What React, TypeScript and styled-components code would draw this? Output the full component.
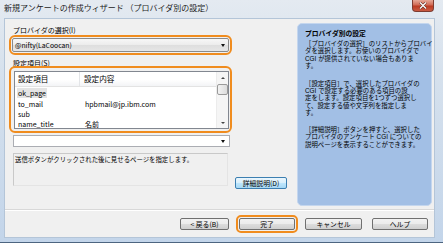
import styled, { createGlobalStyle } from 'styled-components';

const GlobalStyle = createGlobalStyle`
  html, body {
    margin: 0;
    padding: 0;
    background: #fff;
  }
  body {
    font-family: "Noto Sans CJK JP", "Liberation Sans", sans-serif;
    color: #000;
  }
`;

const Window = styled.div`
  width: 443px;
  height: 243px;
  box-sizing: border-box;
  display: flex;
  flex-direction: column;
  padding: 0 8px 4px 4px;
  background: linear-gradient(#e4eaf1 0%, #d6e1ed 30%, #c3d5ea 100%);
  border-bottom: 1px solid #4d6580;
  overflow: hidden;
`;

const TitleBar = styled.div`
  height: 18px;
  flex: none;
  display: flex;
  justify-content: space-between;
  align-items: flex-start;
`;

const Title = styled.div`
  padding-top: 3px;
  font-size: 8px;
  line-height: 9px;
  color: #1c1c1c;
  white-space: nowrap;
`;

const CloseButton = styled.div`
  width: 22px;
  height: 12px;
  margin-right: 1px;
  box-sizing: border-box;
  display: flex;
  align-items: center;
  justify-content: center;
  border: 1px solid #7d3b30;
  border-top: none;
  border-radius: 0 0 4px 4px;
  background: linear-gradient(#e6a796 0%, #d06a55 45%, #bb3a22 55%, #c95a42 100%);
`;

const Client = styled.div`
  flex: 1;
  display: flex;
  flex-direction: column;
  box-sizing: border-box;
  background: #f0f0f0;
  border: 1px solid #b4c5d8;
`;

const Body = styled.div`
  height: 190px;
  flex: none;
  display: flex;
  padding: 4px 2px 0 4px;
  box-sizing: border-box;
`;

const LeftCol = styled.div`
  width: 281px;
  display: flex;
  flex-direction: column;
`;

const Label = styled.div<{ $top: number }>`
  margin-top: ${({ $top }) => $top}px;
  margin-bottom: ${({ $top }) => ($top > 3 ? -2 : 0)}px;
  padding-left: 4px;
  height: 8px;
  font-size: 7px;
  line-height: 8px;
  white-space: nowrap;
`;

const Highlight = styled.div<{ $h: number }>`
  width: 223px;
  height: ${({ $h }) => $h}px;
  margin-top: 1px;
  box-sizing: border-box;
  border: 2px solid #f08c1e;
  border-radius: 6px;
  padding: ${({ $h }) => ($h > 30 ? '3px 1px 2px 3px' : '1px')};
`;

const DropList = styled.div`
  height: 14px;
  box-sizing: border-box;
  display: flex;
  align-items: center;
  justify-content: space-between;
  padding: 0 3px 0 2px;
  border: 1px solid #8a8a8a;
  border-radius: 2px;
  background: linear-gradient(#f7f7f7 0%, #ececec 50%, #dedede 51%, #e6e6e6 100%);
  font-size: 6.8px;
`;

const Arrow = styled.span`
  width: 0;
  height: 0;
  border-left: 2.5px solid transparent;
  border-right: 2.5px solid transparent;
  border-top: 3px solid #111;
`;

const ListView = styled.div`
  height: 58px;
  box-sizing: border-box;
  display: flex;
  border: 1px solid #828790;
  background: #fff;
`;

const ListContent = styled.div`
  flex: 1;
  display: flex;
  flex-direction: column;
`;

const HeaderRow = styled.div`
  height: 15px;
  flex: none;
  box-sizing: border-box;
  display: flex;
  border-bottom: 1px solid #e3e3e3;
  background: linear-gradient(#ffffff 0%, #ffffff 55%, #f3f4f6 100%);
  font-size: 7.6px;
  line-height: 14px;
`;

const HeadCell = styled.div<{ $w?: number }>`
  width: ${({ $w }) => ($w ? `${$w}px` : 'auto')};
  flex: ${({ $w }) => ($w ? 'none' : '1')};
  box-sizing: border-box;
  padding-left: ${({ $w }) => ($w ? 3 : 4)}px;
  border-right: ${({ $w }) => ($w ? '1px solid #e3e5e8' : 'none')};
`;

const Rows = styled.div`
  padding-top: 1.5px;
`;

const Row = styled.div`
  height: 10.4px;
  display: flex;
  align-items: center;
  font-size: 7px;
  line-height: 9px;
`;

const Cell = styled.div<{ $w?: number }>`
  width: ${({ $w }) => ($w ? `${$w}px` : 'auto')};
  flex: ${({ $w }) => ($w ? 'none' : '1')};
  padding-left: ${({ $w }) => ($w ? 3 : 5)}px;
  box-sizing: border-box;
  white-space: nowrap;
`;

const Selected = styled.span`
  margin-left: -1px;
  padding: 0 1px;
  background: #e4e4e4;
`;

const ScrollBar = styled.div`
  width: 11px;
  flex: none;
  display: flex;
  flex-direction: column;
  background: #f5f5f5;
  border-left: 1px solid #ececec;
`;

const ScrollBtn = styled.div`
  height: 11px;
  display: flex;
  align-items: center;
  justify-content: center;
`;

const ArrowUp = styled.span`
  width: 0;
  height: 0;
  border-left: 2px solid transparent;
  border-right: 2px solid transparent;
  border-bottom: 2.5px solid #444;
`;

const ArrowDown = styled(ArrowUp)`
  border-bottom: none;
  border-top: 2.5px solid #444;
`;

const Thumb = styled.div`
  height: 11px;
  margin: 1px 0 0 0;
  box-sizing: border-box;
  border: 1px solid #9a9a9a;
  border-radius: 2px;
  background: linear-gradient(90deg, #f2f2f2, #dcdcdc);
`;

const ScrollTrack = styled.div`
  flex: 1;
`;

const Combo = styled.div`
  width: 217px;
  height: 12px;
  margin: 2px 0 0 4px;
  box-sizing: border-box;
  display: flex;
  align-items: center;
  justify-content: flex-end;
  padding-right: 4px;
  border: 1px solid #abadb3;
  background: #fff;
`;

const DescRow = styled.div`
  display: flex;
  align-items: flex-start;
  margin-top: 6px;
  padding-left: 4px;
`;

const DescBox = styled.div`
  width: 215px;
  height: 33px;
  box-sizing: border-box;
  padding: 2px 1px;
  border: 1px solid #c9c9c9;
  border-right-color: #e4e4e4;
  border-bottom-color: #e4e4e4;
  background: #f0f0f0;
  font-size: 6.4px;
  line-height: 8px;
  white-space: nowrap;
`;

const Button = styled.button<{ $w: number; $focus?: boolean; $mark?: boolean }>`
  width: ${({ $w }) => $w}px;
  height: 12px;
  padding: 0;
  box-sizing: border-box;
  font-family: "Noto Sans CJK JP", "Liberation Sans", sans-serif;
  font-size: 6.8px;
  line-height: 10px;
  color: #000;
  border-radius: 2px;
  border: 1px solid ${({ $focus }) => ($focus ? '#3c7fb1' : '#707070')};
  background: ${({ $focus }) =>
    $focus
      ? 'linear-gradient(#eaf6fd 0%, #d9f0fc 50%, #bee6fd 51%, #a7d9f5 100%)'
      : 'linear-gradient(#f2f2f2 0%, #ebebeb 50%, #dddddd 51%, #cfcfcf 100%)'};
  outline: ${({ $mark }) => ($mark ? '2px solid #f08c1e' : 'none')};
  outline-offset: 1px;
  white-space: nowrap;
`;

const DetailButton = styled(Button)`
  margin: 24px 0 0 7px;
`;

const Panel = styled.div`
  width: 135px;
  height: 183px;
  margin-left: 7px;
  box-sizing: border-box;
  padding: 6px 0 0 7px;
  border: 1px solid #c4d6ee;
  border-radius: 5px;
  background: #a2bfe5;
  font-family: "Liberation Sans", "Noto Sans CJK JP", sans-serif;
  font-size: 6.4px;
  white-space: nowrap;
`;

const PanelTitle = styled.div`
  font-weight: bold;
  font-size: 6.8px;
  line-height: 8px;
  height: 8px;
`;

const Para = styled.div<{ $top: number }>`
  margin-top: ${({ $top }) => $top}px;
`;

const Line = styled.div`
  height: 7.3px;
  line-height: 7.3px;
`;

const Footer = styled.div`
  flex: 1;
  display: flex;
  justify-content: flex-end;
  align-items: flex-start;
  gap: 10px;
  padding: 8px 6px 0 0;
  border-top: 1px solid #d8d8d8;
  box-shadow: inset 0 1px 0 #fff;
`;

const rows = [
  { key: 'ok_page', value: '', selected: true },
  { key: 'to_mail', value: 'hpbmail@jp.ibm.com' },
  { key: 'sub', value: '' },
  { key: 'name_title', value: '名前' },
];

const paragraphs = [
  {
    top: 2,
    lines: [
      '［プロバイダの選択］のリストからプロバイ',
      'ダを選択します。お使いのプロバイダで',
      'CGI が提供されていない場合もありま',
      'す。',
    ],
  },
  {
    top: 10.5,
    lines: [
      '［設定項目］で、選択したプロバイダの',
      'CGI で設定する必要のある項目の設',
      '定をします。設定項目を1つずつ選択し',
      'て、設定する値や文字列を指定しま',
      'す。',
    ],
  },
  {
    top: 10,
    lines: [
      '［詳細説明］ボタンを押すと、選択した',
      'プロバイダのアンケート CGI についての',
      '説明ページを表示することができます。',
    ],
  },
];

export default function App() {
  return (
    <>
      <GlobalStyle />
      <Window>
        <TitleBar>
          <Title>新規アンケートの作成ウィザード （プロバイダ別の設定）</Title>
          <CloseButton>
            <svg width="8" height="7" viewBox="0 0 8 7">
              <path d="M1 0.5 L7 6.5 M7 0.5 L1 6.5" stroke="#5a2a22" strokeWidth="2.4" />
              <path d="M1 0.5 L7 6.5 M7 0.5 L1 6.5" stroke="#fff" strokeWidth="1.3" />
            </svg>
          </CloseButton>
        </TitleBar>
        <Client>
          <Body>
            <LeftCol>
              <Label $top={3}>プロバイダの選択(I)</Label>
              <Highlight $h={20}>
                <DropList>
                  <span>@nifty(LaCoocan)</span>
                  <Arrow />
                </DropList>
              </Highlight>
              <Label $top={4}>設定項目(S)</Label>
              <Highlight $h={67}>
                <ListView>
                  <ListContent>
                    <HeaderRow>
                      <HeadCell $w={65}>設定項目</HeadCell>
                      <HeadCell>設定内容</HeadCell>
                    </HeaderRow>
                    <Rows>
                      {rows.map((r) => (
                        <Row key={r.key}>
                          <Cell $w={65}>{r.selected ? <Selected>{r.key}</Selected> : r.key}</Cell>
                          <Cell>{r.value}</Cell>
                        </Row>
                      ))}
                    </Rows>
                  </ListContent>
                  <ScrollBar>
                    <ScrollBtn><ArrowUp /></ScrollBtn>
                    <Thumb />
                    <ScrollTrack />
                    <ScrollBtn><ArrowDown /></ScrollBtn>
                  </ScrollBar>
                </ListView>
              </Highlight>
              <Combo><Arrow /></Combo>
              <DescRow>
                <DescBox>送信ボタンがクリックされた後に見せるページを指定します。</DescBox>
                <DetailButton $w={52} $focus>詳細説明(D)</DetailButton>
              </DescRow>
            </LeftCol>
            <Panel>
              <PanelTitle>プロバイダ別の設定</PanelTitle>
              {paragraphs.map((p, i) => (
                <Para key={i} $top={p.top}>
                  {p.lines.map((l) => (
                    <Line key={l}>{l}</Line>
                  ))}
                </Para>
              ))}
            </Panel>
          </Body>
          <Footer>
            <Button $w={49}>&lt; 戻る(B)</Button>
            <Button $w={56} $mark>完了</Button>
            <Button $w={57}>キャンセル</Button>
            <Button $w={56}>ヘルプ</Button>
          </Footer>
        </Client>
      </Window>
    </>
  );
}
